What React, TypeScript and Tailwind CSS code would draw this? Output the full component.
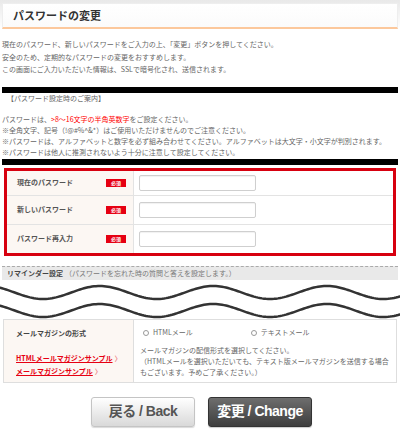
import React from 'react';

const jp = { fontFamily: '"Noto Sans CJK JP", "Noto Sans", sans-serif' };
const btnFont = { fontFamily: '"Liberation Sans", "Noto Sans CJK JP", sans-serif' };

const wavePath = (c: number, a: number) => {
  const pts: string[] = [];
  for (let x = -2; x <= 402; x += 2) {
    const y = c + a * Math.cos((2 * Math.PI * (x - 43)) / 113.5);
    pts.push(`${x === -2 ? 'M' : 'L'}${x} ${y.toFixed(2)}`);
  }
  return pts.join(' ');
};

const Badge = () => (
  <span className="inline-flex h-[8px] w-[20px] items-center justify-center bg-[#e60012] text-[5px] font-bold leading-none text-white">
    必須
  </span>
);

const fields = [
  { label: '現在のパスワード', h: 'h-[24px]' },
  { label: '新しいパスワード', h: 'h-[29px]' },
  { label: 'パスワード再入力', h: 'h-[29px]' },
];

const App: React.FC = () => {
  return (
    <div className="h-[433px] w-[400px] overflow-hidden bg-white text-[#666]" style={jp}>
      {/* title */}
      <div className="bg-gradient-to-b from-[#e9e9e9] to-white px-[2px] pt-[3px]">
        <div className="flex h-[26px] items-center border border-b-2 border-[#eeeeee] border-b-[#fcc89c] bg-gradient-to-b from-white to-[#fbfbfb] pl-[10px]">
          <h1 className="text-[11px] font-bold text-[#333]">パスワードの変更</h1>
        </div>
      </div>

      <div className="mt-[9px] px-[2px] text-[7px] leading-[12.5px]">
        <p>現在のパスワード、新しいパスワードをご入力の上、「変更」ボタンを押してください。</p>
        <p>安全のため、定期的なパスワードの変更をおすすめします。</p>
        <p>この画面にご入力いただいた情報は、SSLで暗号化され、送信されます。</p>
      </div>

      <div className="mx-[2px] mt-[11px] h-[6px] bg-black" />

      <p className="pl-[7px] text-[7px] leading-[10px]">【パスワード設定時のご案内】</p>

      <div className="mt-[11px] px-[2px] text-[7px] leading-[11px]">
        <p>
          パスワードは、<span className="text-[#f00]">&gt;8～16文字の半角英数字</span>をご設定ください。
        </p>
        <p>※全角文字、記号（!@#%^&amp;*）はご使用いただけませんのでご注意ください。</p>
        <p>※パスワードは、アルファベットと数字を必ず組み合わせてください。アルファベットは大文字・小文字が判別されます。</p>
        <p>※パスワードは他人に推測されないよう十分に注意して設定してください。</p>
      </div>

      <div className="mx-[2px] mt-[1px] h-[6px] bg-black" />

      {/* form */}
      <div className="mx-[4px] mt-[3px] border-[3px] border-[#d7000f]">
        {fields.map((f, i) => (
          <div key={f.label} className={`flex ${f.h} ${i > 0 ? 'border-t border-[#e3e3e3]' : ''}`}>
            <div className="flex w-[127px] items-center justify-between border-r border-[#e3e3e3] bg-[#fcf7f3] pl-[10px] pr-[7px]">
              <span className="text-[7px] font-bold text-[#555]">{f.label}</span>
              <Badge />
            </div>
            <div className="flex flex-1 items-center pl-[5px]">
              <input
                type="password"
                className="h-[16px] w-[117px] rounded-[2px] border border-[#cfcfcf] bg-white shadow-[inset_0_1px_1px_rgba(0,0,0,0.06)]"
              />
            </div>
          </div>
        ))}
      </div>

      {/* reminder */}
      <div className="mx-[2px] mt-[10px] flex h-[14px] items-center border-t border-dashed border-[#aaa] bg-[#e9e9e9] pl-[5px] text-[7px]">
        <span className="font-bold text-[#444]">リマインダー設定</span>
        <span className="ml-[2px] text-[#777]">（パスワードを忘れた時の質問と答えを設定します。）</span>
      </div>

      <svg width="400" height="39" viewBox="0 0 400 39" className="block">
        <path d={wavePath(12.5, 6.5)} fill="none" stroke="#333" strokeWidth="2.5" />
        <path d={wavePath(30.5, 6.5)} fill="none" stroke="#333" strokeWidth="2.5" />
      </svg>

      {/* mail magazine */}
      <div className="mx-[3px] flex h-[64px] border border-[#dedede]">
        <div className="w-[130px] border-r border-[#dedede] bg-[#fcf7f3] pl-[12px] pt-[8px]">
          <p className="text-[7px] font-bold leading-[10px] text-[#444]">メールマガジンの形式</p>
          <div className="mt-[14px] text-[7px] font-bold leading-[13px]">
            <p>
              <span className="text-[#e60012] underline">HTMLメールマガジンサンプル</span>
              <span className="ml-[2px] text-[#e88]">〉</span>
            </p>
            <p>
              <span className="text-[#e60012] underline">メールマガジンサンプル</span>
              <span className="ml-[2px] text-[#e88]">〉</span>
            </p>
          </div>
        </div>
        <div className="flex-1 pl-[6px] pt-[8px] text-[7px]">
          <div className="flex h-[10px] items-center pl-[3px]">
            <span className="flex items-center gap-[4px]">
              <span className="h-[6px] w-[6px] rounded-full border border-[#999]" />
              HTMLメール
            </span>
            <span className="ml-[58px] flex items-center gap-[4px]">
              <span className="h-[6px] w-[6px] rounded-full border border-[#999]" />
              テキストメール
            </span>
          </div>
          <div className="mt-[7px] leading-[11px]">
            <p>メールマガジンの配信形式を選択してください。</p>
            <p>（HTMLメールを選択いただいても、テキスト版メールマガジンを送信する場合</p>
            <p>もございます。予めご了承ください。）</p>
          </div>
        </div>
      </div>

      {/* buttons */}
      <div className="mt-[14px] flex justify-center gap-[13px] pl-[3px]" style={btnFont}>
        <button className="h-[30px] w-[104px] rounded-[3px] border border-[#c4c4c4] bg-gradient-to-b from-white to-[#d9d9d9] text-[14px] font-bold tracking-[-0.5px] text-[#555] shadow-[0_1px_1px_rgba(0,0,0,0.15)]">
          戻る / Back
        </button>
        <button className="h-[30px] w-[104px] rounded-[3px] border border-[#333] bg-gradient-to-b from-[#6e6e6e] to-[#3e3e3e] text-[14px] font-bold tracking-[-0.5px] text-white shadow-[0_1px_1px_rgba(0,0,0,0.2)]">
          変更 / Change
        </button>
      </div>
    </div>
  );
};

export default App;
